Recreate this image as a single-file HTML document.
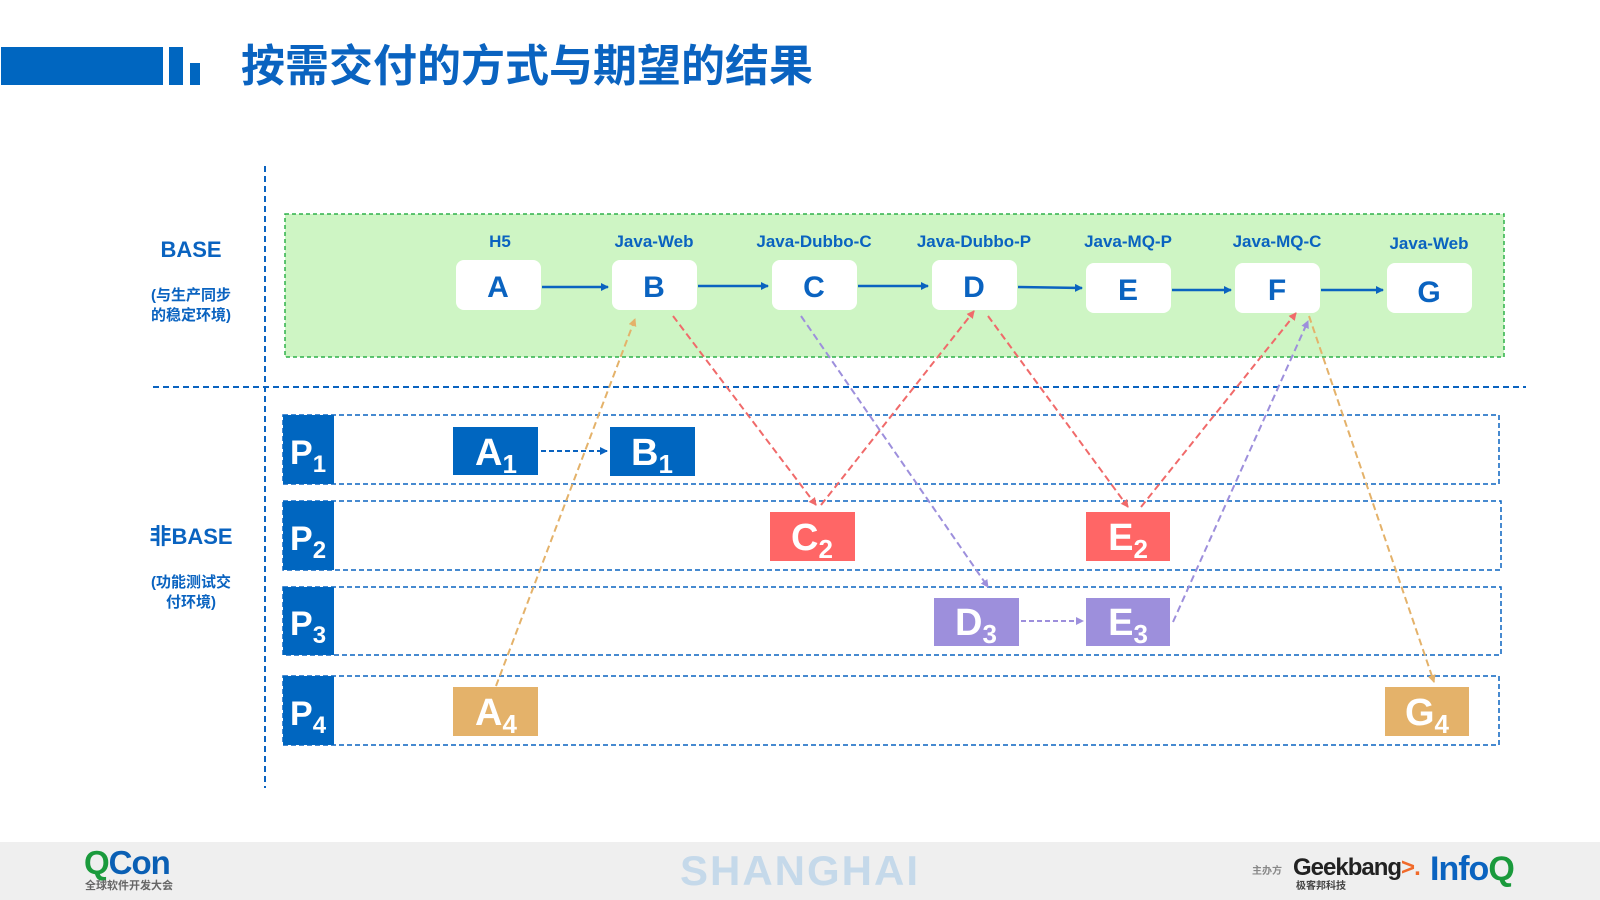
<!DOCTYPE html>
<html><head><meta charset="utf-8"><style>
html,body{margin:0;padding:0;width:1600px;height:900px;overflow:hidden;background:#fff}
svg{display:block}
text{font-family:"Liberation Sans","Noto Sans CJK SC",sans-serif;font-weight:bold}
</style></head><body>
<svg width="1600" height="900" viewBox="0 0 1600 900" xmlns="http://www.w3.org/2000/svg">
<defs>
<marker id="ab" markerWidth="8" markerHeight="8" refX="7" refY="4" orient="auto" markerUnits="userSpaceOnUse"><path d="M0,0 L8,4 L0,8z" fill="#0a63c0"/></marker>
<marker id="ar" markerWidth="8" markerHeight="8" refX="7" refY="4" orient="auto" markerUnits="userSpaceOnUse"><path d="M0,0 L8,4 L0,8z" fill="#f06a6a"/></marker>
<marker id="ap" markerWidth="8" markerHeight="8" refX="7" refY="4" orient="auto" markerUnits="userSpaceOnUse"><path d="M0,0 L8,4 L0,8z" fill="#9d8fdc"/></marker>
<marker id="ao" markerWidth="8" markerHeight="8" refX="7" refY="4" orient="auto" markerUnits="userSpaceOnUse"><path d="M0,0 L8,4 L0,8z" fill="#e4b26a"/></marker>
</defs>
<rect x="1" y="47" width="162" height="38" fill="#0066c0"/>
<rect x="169" y="47" width="14" height="38" fill="#0066c0"/>
<rect x="190" y="63" width="10" height="22" fill="#0066c0"/>
<text x="241" y="81" font-size="44" fill="#0a63c0">按需交付的方式与期望的结果</text>
<line x1="265" y1="166" x2="265" y2="788" stroke="#0a63c0" stroke-width="2" stroke-dasharray="6,4"/>
<line x1="153" y1="387" x2="1526" y2="387" stroke="#0a63c0" stroke-width="2" stroke-dasharray="6,4"/>
<text x="191" y="257" font-size="22" fill="#0a63c0" text-anchor="middle">BASE</text>
<text x="191" y="300" font-size="15" fill="#0a63c0" text-anchor="middle">(与生产同步</text>
<text x="191" y="320" font-size="15" fill="#0a63c0" text-anchor="middle">的稳定环境)</text>
<text x="191" y="544" font-size="22" fill="#0a63c0" text-anchor="middle">非BASE</text>
<text x="191" y="587" font-size="15" fill="#0a63c0" text-anchor="middle">(功能测试交</text>
<text x="191" y="607" font-size="15" fill="#0a63c0" text-anchor="middle">付环境)</text>
<rect x="285" y="214" width="1219" height="143" fill="#cef5c4" stroke="#2fb24a" stroke-width="1.5" stroke-dasharray="4,3"/>
<g font-size="17" fill="#0a63c0" text-anchor="middle">
<text x="500" y="247">H5</text><text x="654" y="247">Java-Web</text><text x="814" y="247">Java-Dubbo-C</text>
<text x="974" y="247">Java-Dubbo-P</text><text x="1128" y="247">Java-MQ-P</text><text x="1277" y="247">Java-MQ-C</text><text x="1429" y="249">Java-Web</text>
</g>
<g fill="#fff">
<rect x="456" y="260" width="85" height="50" rx="8"/><rect x="612" y="260" width="85" height="50" rx="8"/>
<rect x="772" y="260" width="85" height="50" rx="8"/><rect x="932" y="260" width="85" height="50" rx="8"/>
<rect x="1086" y="263" width="85" height="50" rx="8"/><rect x="1235" y="263" width="85" height="50" rx="8"/>
<rect x="1387" y="263" width="85" height="50" rx="8"/>
</g>
<g font-size="30" fill="#0a63c0" text-anchor="middle">
<text x="498" y="297">A</text><text x="654" y="297">B</text><text x="814" y="297">C</text><text x="974" y="297">D</text>
<text x="1128" y="300">E</text><text x="1277" y="300">F</text><text x="1429" y="302">G</text>
</g>
<g stroke="#0a63c0" stroke-width="2.5" marker-end="url(#ab)">
<line x1="542" y1="287" x2="608" y2="287"/><line x1="698" y1="286" x2="768" y2="286"/>
<line x1="858" y1="286" x2="928" y2="286"/><line x1="1018" y1="287" x2="1082" y2="288"/>
<line x1="1172" y1="290" x2="1231" y2="290"/><line x1="1321" y1="290" x2="1383" y2="290"/>
</g>
<g fill="none" stroke="#0a63c0" stroke-width="1.5" stroke-dasharray="5,3">
<rect x="283" y="415" width="1216" height="69"/><rect x="283" y="501" width="1218" height="69"/>
<rect x="283" y="587" width="1218" height="68"/><rect x="283" y="676" width="1216" height="69"/>
</g>
<g fill="#0066c0">
<rect x="283" y="415" width="51" height="69"/><rect x="283" y="501" width="51" height="69"/>
<rect x="283" y="587" width="51" height="68"/><rect x="283" y="676" width="51" height="69"/>
</g>
<g fill="#fff" font-size="34">
<text x="290" y="464">P<tspan font-size="24" dy="8">1</tspan></text>
<text x="290" y="550">P<tspan font-size="24" dy="8">2</tspan></text>
<text x="290" y="635">P<tspan font-size="24" dy="8">3</tspan></text>
<text x="290" y="725">P<tspan font-size="24" dy="8">4</tspan></text>
</g>
<rect x="453" y="427" width="85" height="48" fill="#0066c0"/><rect x="610" y="427" width="85" height="49" fill="#0066c0"/>
<rect x="770" y="512" width="85" height="49" fill="#ff6666"/><rect x="1086" y="512" width="84" height="49" fill="#ff6666"/>
<rect x="934" y="598" width="85" height="48" fill="#9d8fdc"/><rect x="1086" y="598" width="84" height="48" fill="#9d8fdc"/>
<rect x="453" y="687" width="85" height="49" fill="#e4b26a"/><rect x="1385" y="687" width="84" height="49" fill="#e4b26a"/>
<g fill="#fff" font-size="38" text-anchor="middle">
<text x="496" y="465">A<tspan font-size="26" dy="8">1</tspan></text>
<text x="652" y="465">B<tspan font-size="26" dy="8">1</tspan></text>
<text x="812" y="550">C<tspan font-size="26" dy="8">2</tspan></text>
<text x="1128" y="550">E<tspan font-size="26" dy="8">2</tspan></text>
<text x="976" y="635">D<tspan font-size="26" dy="8">3</tspan></text>
<text x="1128" y="635">E<tspan font-size="26" dy="8">3</tspan></text>
<text x="496" y="725">A<tspan font-size="26" dy="8">4</tspan></text>
<text x="1427" y="725">G<tspan font-size="26" dy="8">4</tspan></text>
</g>
<line x1="541" y1="451" x2="607" y2="451" stroke="#0a63c0" stroke-width="2" stroke-dasharray="5,3" marker-end="url(#ab)"/>
<line x1="1021" y1="621" x2="1083" y2="621" stroke="#9d8fdc" stroke-width="2" stroke-dasharray="5,3" marker-end="url(#ap)"/>
<g fill="none" stroke-width="2" stroke-dasharray="7,4">
<path d="M673,316 L816,505" stroke="#f06a6a" marker-end="url(#ar)"/>
<path d="M821,505 L974,311" stroke="#f06a6a" marker-end="url(#ar)"/>
<path d="M988,316 L1128,507" stroke="#f06a6a" marker-end="url(#ar)"/>
<path d="M1141,507 L1296,313" stroke="#f06a6a" marker-end="url(#ar)"/>
<path d="M801,316 L988,587" stroke="#9d8fdc" marker-end="url(#ap)"/>
<path d="M1173,622 L1308,321" stroke="#9d8fdc" marker-end="url(#ap)"/>
<path d="M496,686 L635,319" stroke="#e4b26a" marker-end="url(#ao)"/>
<path d="M1309,316 L1434,682" stroke="#e4b26a" marker-end="url(#ao)"/>
</g>
<rect x="0" y="842" width="1600" height="58" fill="#efefef"/>
<text x="84" y="874" font-size="33" fill="#1a9a3c" style="letter-spacing:-1px">Q<tspan fill="#0a5fb4">Con</tspan></text>
<text x="85" y="889" font-size="11" fill="#666" font-weight="normal">全球软件开发大会</text>
<text x="800" y="885" font-size="42" fill="#c5d9ea" text-anchor="middle" font-weight="900" style="letter-spacing:2px">SHANGHAI</text>
<text x="1252" y="874" font-size="10" fill="#888" font-weight="normal">主办方</text>
<text x="1293" y="875" font-size="24" fill="#222" style="letter-spacing:-1px">Geekbang<tspan fill="#f06a2a">&gt;.</tspan></text>
<text x="1296" y="889" font-size="10" fill="#444">极客邦科技</text>
<text x="1430" y="880" font-size="34" fill="#0a63c0" style="letter-spacing:-1px">Info<tspan fill="#1a9a3c">Q</tspan></text>
</svg>
</body></html>
